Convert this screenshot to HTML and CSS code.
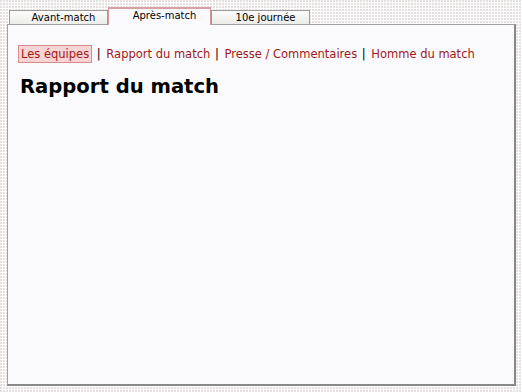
FILE: index.html
```html
<!DOCTYPE html>
<html lang="fr">
<head>
<meta charset="UTF-8">
<title>Après-match</title>
<link rel="stylesheet" href="styles.css">
</head>
<body>
<div class="tabs">
    <div class="tab">Avant-match</div>
    <div class="tab active">Après-match</div>
    <div class="tab">10e journée</div>
</div>
<div class="panel">
    <div class="links">
        <a class="current" href="#">Les équipes</a>
        <span class="sep">|</span>
        <a href="#">Rapport du match</a>
        <span class="sep">|</span>
        <a href="#">Presse / Commentaires</a>
        <span class="sep">|</span>
        <a href="#">Homme du match</a>
    </div>
    <h1>Rapport du match</h1>
</div>
</body>
</html>
```

FILE: styles.css
```css
body {
    margin: 0;
    padding: 7px 6px 6px 7px;
    font-family: "DejaVu Sans", Verdana, sans-serif;
    background-image: linear-gradient(90deg, transparent 2px, #fff 2px), linear-gradient(transparent 2px, #fff 2px);
    background-size: 3px 3px;
    background-color: #e6dfdf;
}

.tabs {
    display: flex;
    align-items: flex-end;
    padding-left: 2px;
    height: 17px;
    position: relative;
    z-index: 1;
}

.tab {
    box-sizing: border-box;
    width: 99px;
    height: 14px;
    padding-left: 10px;
    border: 1px solid #9a9a9a;
    border-bottom: none;
    background: linear-gradient(#fcfcfb, #ecece8);
    font-size: 10px;
    line-height: 14px;
    text-align: center;
    color: #000;
}

.tab.active {
    width: 103px;
    height: 18px;
    border: 1px solid #d09898;
    border-top: 2px solid #d8a0a0;
    border-bottom: none;
    background: #fafafe;
    line-height: 13px;
    margin-bottom: -1px;
}

.panel {
    height: 359px;
    border: 1px solid #a0a0a0;
    border-right: 2px solid #888;
    border-bottom: 2px solid #888;
    background: #fafafd;
    padding: 0 10px;
}

.links {
    margin-top: 20px;
    font-size: 11.5px;
    line-height: 18px;
}

.links a {
    color: #a01818;
    text-decoration: none;
}

.links a.current {
    padding: 1px 2px;
    background: #f8d4d4;
    border: 1px solid #d88c8c;
}

.sep {
    color: #000;
    margin: 0 2px 0 1px;
}

h1 {
    margin: 12px 0 0 2px;
    font-size: 19.6px;
    font-weight: bold;
    line-height: 24px;
    color: #000;
}
```
